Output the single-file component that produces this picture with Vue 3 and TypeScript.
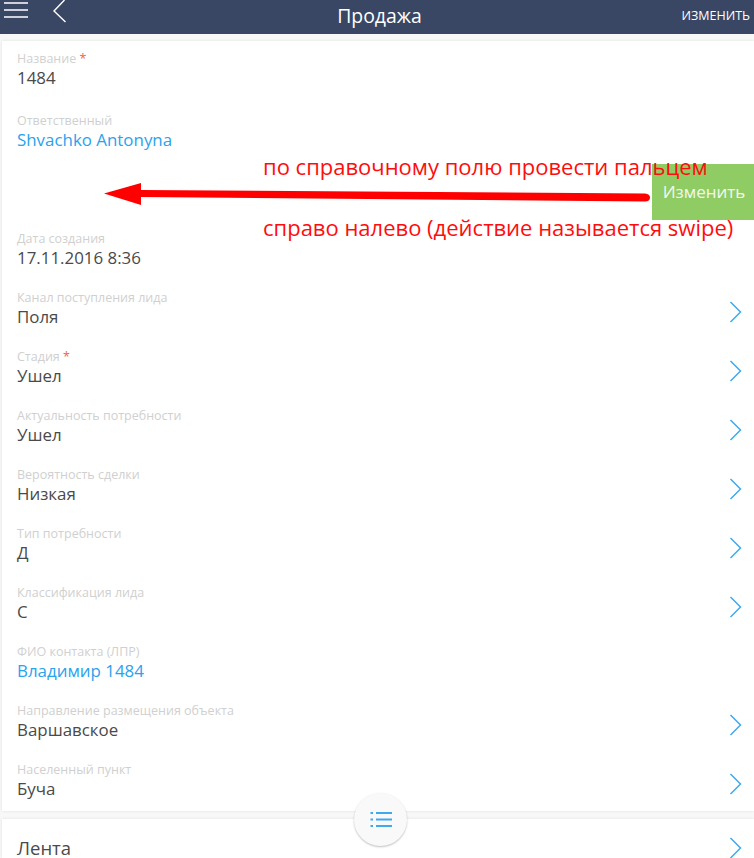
<script setup lang="ts">
interface Field {
  label: string
  value: string
  required?: boolean
  link?: boolean
  arrow?: boolean
}

const topFields: Field[] = [
  { label: 'Название', value: '1484', required: true },
  { label: 'Ответственный', value: 'Shvachko Antonyna', link: true },
]

const fields: Field[] = [
  { label: 'Дата создания', value: '17.11.2016 8:36' },
  { label: 'Канал поступления лида', value: 'Поля', arrow: true },
  { label: 'Стадия', value: 'Ушел', required: true, arrow: true },
  { label: 'Актуальность потребности', value: 'Ушел', arrow: true },
  { label: 'Вероятность сделки', value: 'Низкая', arrow: true },
  { label: 'Тип потребности', value: 'Д', arrow: true },
  { label: 'Классификация лида', value: 'С', arrow: true },
  { label: 'ФИО контакта (ЛПР)', value: 'Владимир 1484', link: true },
  { label: 'Направление размещения объекта', value: 'Варшавское', arrow: true },
  { label: 'Населенный пункт', value: 'Буча', arrow: true },
]
</script>

<template>
  <div class="page">
    <header class="bar">
      <div class="bar-left">
        <svg class="burger" width="24" height="20" viewBox="0 0 24 20">
          <path d="M0 3h24M0 10h24M0 17h24" stroke="#fff" stroke-width="1.6" fill="none" />
        </svg>
        <svg class="back" width="14" height="24" viewBox="0 0 14 24">
          <path d="M11.500 0 1 11 12.500 22" stroke="#fff" stroke-width="1.4" fill="none" />
        </svg>
      </div>
      <h1 class="title">Продажа</h1>
      <span class="edit">ИЗМЕНИТЬ</span>
    </header>

    <section class="card main">
      <div v-for="f in topFields" :key="f.label" class="row">
        <div class="label">{{ f.label }}<span v-if="f.required" class="req"> *</span></div>
        <div class="value" :class="{ link: f.link }">{{ f.value }}</div>
      </div>
      <div class="swipe-row">
        <div class="swipe-action">Изменить</div>
      </div>
      <div v-for="f in fields" :key="f.label" class="row">
        <div class="label">{{ f.label }}<span v-if="f.required" class="req"> *</span></div>
        <div class="value" :class="{ link: f.link }">{{ f.value }}</div>
        <svg v-if="f.arrow" class="chev" width="13" height="22" viewBox="0 0 13 22">
          <path d="M1.500 1 11.500 11 1.500 21" stroke="#3fa9f0" stroke-width="1.5" fill="none" />
        </svg>
      </div>
    </section>

    <section class="card feed">
      <span class="feed-title">Лента</span>
      <svg class="chev" width="13" height="22" viewBox="0 0 13 22">
        <path d="M1.500 1 11.500 11 1.500 21" stroke="#3fa9f0" stroke-width="1.5" fill="none" />
      </svg>
    </section>

    <button class="fab" type="button" aria-label="Меню">
      <svg width="22" height="17" viewBox="0 0 22 17">
        <path d="M6 2h16M6 8.500h16M6 15h16" stroke="#3fa9f0" stroke-width="2" fill="none" />
        <path d="M0.500 2h2.500M0.500 8.500h2.500M0.500 15h2.500" stroke="#3fa9f0" stroke-width="2" fill="none" />
      </svg>
    </button>

    <!-- red notes drawn on top of the screenshot -->
    <div class="note note-1">по справочному полю провести пальцем</div>
    <div class="note note-2">справо налево (действие называется swipe)</div>
    <svg class="arrow" width="754" height="858" viewBox="0 0 754 858">
      <path d="M104 193.500 141 183V190L645 193.500Q650 194 650 197.500 650 201.500 645 201.500L141 197V205Z" fill="#ff0000" />
    </svg>
  </div>
</template>

<style scoped>
.page {
  position: relative;
  width: 754px;
  height: 858px;
  overflow: hidden;
  background: #f8f8f8;
  font-family: "Open Sans", "Noto Sans", sans-serif;
}
.bar {
  height: 34px;
  background: #394764;
  color: #fff;
  display: flex;
  align-items: center;
  justify-content: space-between;
  padding: 0 4px;
}
.bar-left {
  width: 125px;
  display: flex;
  align-items: flex-start;
  gap: 25px;
  height: 34px;
}
.title {
  margin: 0;
  font-size: 19.400px;
  font-weight: 400;
  line-height: 24px;
  position: relative;
  top: -1px;
}
.edit {
  width: 120px;
  text-align: right;
  font-size: 12.500px;
  line-height: 24px;
  position: relative;
  top: -1px;
}
.card {
  margin-left: 2px;
  background: #fff;
  box-shadow: 0 0 3px rgba(0, 0, 0, 0.1);
}
.main {
  margin-top: 7px;
  height: 770px;
}
.row {
  position: relative;
  height: 59px;
  padding: 10px 0 0 15px;
  box-sizing: border-box;
}
.row:first-child {
  height: 62px;
}
.label {
  margin-bottom: -1px;
  font-size: 12.500px;
  line-height: 16px;
  color: #d0d0d0;
}
.req {
  color: #f0654f;
}
.value {
  font-size: 16.900px;
  line-height: 24px;
  color: #4a4a4a;
}
.value.link {
  color: #2aa2ee;
}
.chev {
  position: absolute;
  right: 12px;
  top: 21px;
}
.swipe-row {
  height: 59px;
  display: flex;
  justify-content: flex-end;
  align-items: center;
}
.swipe-action {
  width: 102px;
  height: 56px;
  padding-left: 2px;
  box-sizing: border-box;
  background: #8fcc63;
  color: #f2f8ec;
  font-size: 17px;
  display: flex;
  align-items: center;
  justify-content: center;
}
.feed {
  position: relative;
  margin-top: 8px;
  height: 39px;
  padding: 19px 0 0 15px;
  box-sizing: border-box;
  line-height: 20px;
}
.feed-title {
  display: block;
  font-size: 18.500px;
  line-height: 20px;
  color: #4a4a4a;
}
.feed .chev {
  top: 18px;
}
.fab {
  position: absolute;
  left: 354px;
  top: 793px;
  width: 53px;
  height: 53px;
  padding: 0;
  border: none;
  border-radius: 50%;
  background: #f9f9f9;
  box-shadow: 0 1px 2px rgba(0, 0, 0, 0.25);
  display: flex;
  align-items: center;
  justify-content: center;
}
.note {
  position: absolute;
  left: 263px;
  color: #ff0d0d;
  font-size: 22px;
  line-height: 24px;
  white-space: nowrap;
}
.note-1 {
  top: 154px;
}
.note-2 {
  top: 215px;
}
.arrow {
  position: absolute;
  left: 0;
  top: 0;
  pointer-events: none;
}
</style>
